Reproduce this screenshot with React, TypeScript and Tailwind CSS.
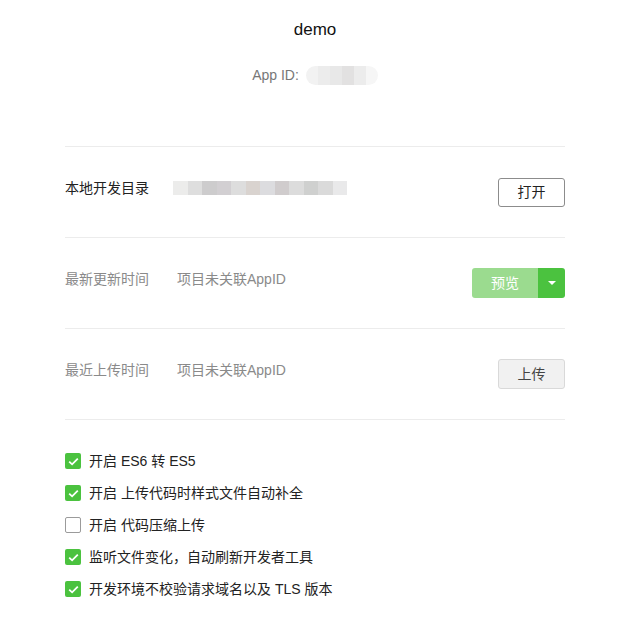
const FONT = { fontFamily: '"Liberation Sans", "Noto Sans CJK SC", sans-serif' };

const MOSAIC = ['#ececeb', '#dedede', '#cdcccd', '#d2cfd2', '#dddddd', '#d9d3cf', '#dcdcdf', '#d0cccd', '#dcdcdc', '#cfd0cf', '#dadada', '#e9e9ea'];
const APPID_MOSAIC = ['#f2f2f2', '#ececec', '#e8e8e8', '#e2e1e1', '#ececec', '#f6f6f6'];

const OPTIONS = [
  { label: '开启 ES6 转 ES5', checked: true },
  { label: '开启 上传代码时样式文件自动补全', checked: true },
  { label: '开启 代码压缩上传', checked: false },
  { label: '监听文件变化，自动刷新开发者工具', checked: true },
  { label: '开发环境不校验请求域名以及 TLS 版本', checked: true },
];

function Checkbox({ checked }: { checked: boolean }) {
  if (!checked) {
    return <span className="w-4 h-4 rounded-[2px] border border-[#9b9b9b] bg-white shrink-0" />;
  }
  return (
    <span className="w-4 h-4 rounded-[2px] bg-[#4bc23f] flex items-center justify-center shrink-0">
      <svg width="11" height="9" viewBox="0 0 11 9" fill="none">
        <path d="M1.2 4.6 L4.1 7.3 L9.8 1.6" stroke="white" strokeWidth="1.8" />
      </svg>
    </span>
  );
}

export default function App() {
  return (
    <div className="min-h-screen bg-white text-sm" style={FONT}>
      <div className="ml-[65px] w-[500px]">
        <header className="flex flex-col items-center pt-[20px] h-[146px]">
          <h1 className="text-[17px] text-[#111] leading-5">demo</h1>
          <div className="flex items-center mt-[25px] text-[#777] leading-5">
            <span>App ID:</span>
            <span className="flex ml-[7px] h-[19px] rounded-full overflow-hidden">
              {APPID_MOSAIC.map((c, i) => (
                <span key={i} className="w-[12px] h-full" style={{ backgroundColor: c }} />
              ))}
            </span>
          </div>
        </header>

        <div className="border-t border-[#ececec] h-[91px] flex items-center justify-between">
          <div className="flex items-center pb-2">
            <span className="w-[108px] text-[#222]">本地开发目录</span>
            <span className="flex h-[14px]">
              {MOSAIC.map((c, i) => (
                <span key={i} className="w-[14.5px] h-full" style={{ backgroundColor: c }} />
              ))}
            </span>
          </div>
          <button className="w-[67px] h-[29px] border border-[#8c8c8c] rounded-[3px] text-[#222] bg-white">打开</button>
        </div>

        <div className="border-t border-[#ececec] h-[91px] flex items-center justify-between">
          <div className="flex items-center pb-2 text-[#8a8a8a]">
            <span className="w-[112px]">最新更新时间</span>
            <span>项目未关联AppID</span>
          </div>
          <div className="flex h-[30px] rounded-[3px] overflow-hidden">
            <span className="w-[66px] bg-[#9bdb8f] text-white flex items-center justify-center">预览</span>
            <span className="w-[27px] bg-[#4bc23f] flex items-center justify-center">
              <span className="w-0 h-0 border-l-[4px] border-r-[4px] border-t-[4px] border-l-transparent border-r-transparent border-t-white" />
            </span>
          </div>
        </div>

        <div className="border-t border-[#ececec] h-[91px] flex items-center justify-between">
          <div className="flex items-center pb-2 text-[#8a8a8a]">
            <span className="w-[112px]">最近上传时间</span>
            <span>项目未关联AppID</span>
          </div>
          <button className="w-[67px] h-[30px] border border-[#d9d9d9] rounded-[3px] bg-[#f1f1f1] text-[#444]">上传</button>
        </div>

        <div className="border-t border-[#ececec] pt-[33px] flex flex-col gap-4">
          {OPTIONS.map((o) => (
            <label key={o.label} className="flex items-center h-4 text-[#222]">
              <Checkbox checked={o.checked} />
              <span className="ml-[8px]">{o.label}</span>
            </label>
          ))}
        </div>
      </div>
    </div>
  );
}
